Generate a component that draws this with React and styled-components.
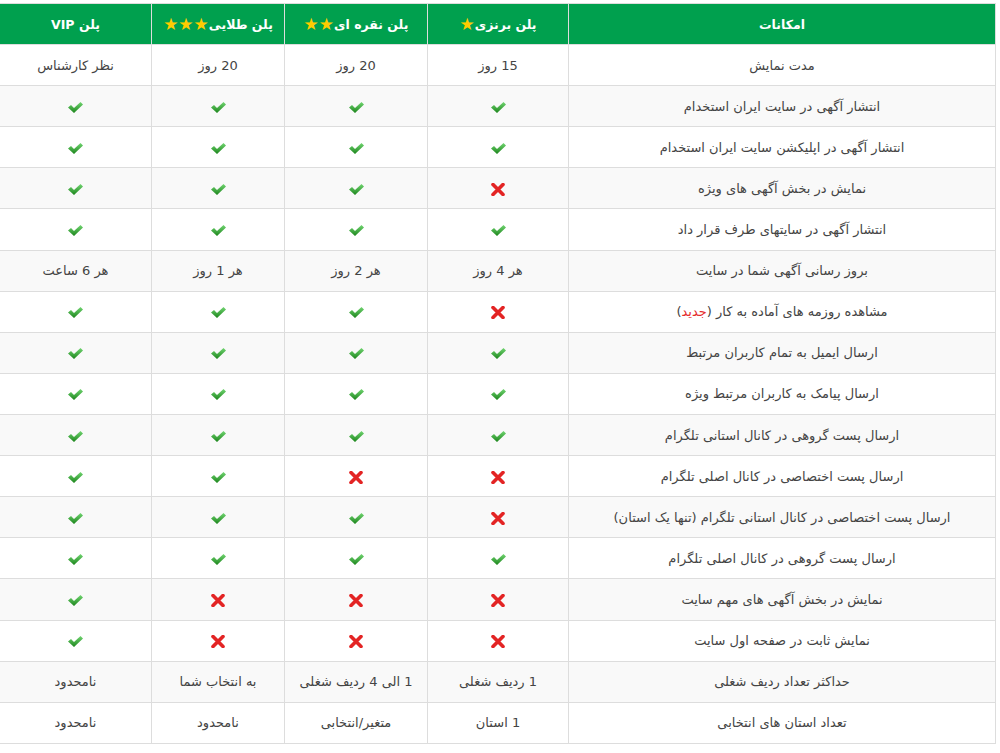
import React from "react";
import styled, { createGlobalStyle } from "styled-components";

const Global = createGlobalStyle`
    body {
        margin: 0;
        background: #fff;
        font-family: "DejaVu Sans", "Noto Sans", sans-serif;
    }
`

const Wrap = styled.div`
    padding: 3px 4px 0 4px;
    direction: rtl;
`

const Table = styled.table`
    width: 992px;
    border-collapse: collapse;
    table-layout: fixed;
    border: 1px solid #ddd;
    font-size: 13px;
    color: #444;
`

const Head = styled.th`
    background: #00a04e;
    color: #fff;
    font-weight: bold;
    font-size: 12.5px;
    height: 40px;
    padding: 0;
    text-align: center;
    border: 1px solid #ddd;
    width: ${p => p.$w}px;
`

const Stars = styled.span`
    color: #ffcc00;
    font-size: 17px;
    letter-spacing: -1px;
    vertical-align: -1px;
`

const Row = styled.tr`
    background: ${p => (p.$odd ? "#fff" : "#f9f9f9")};
`

const Cell = styled.td`
    height: 40.12px;
    padding: 0;
    text-align: center;
    vertical-align: middle;
    border: 1px solid #ddd;
`

const New = styled.span`
    color: #e52b2b;
`

const Check = () => (
    <svg width="17" height="13" viewBox="0 0 17 13" style={{ verticalAlign: "middle" }}>
        <defs>
            <linearGradient id="g" x1="0" y1="0" x2="0" y2="1">
                <stop offset="0" stopColor="#72d672" />
                <stop offset="1" stopColor="#1c851c" />
            </linearGradient>
        </defs>
        <path d="M1 6.5 L4 4 L7 7 L13.5 1 L16 3.5 L7 12 Z" fill="url(#g)" />
    </svg>
)

const Cross = () => (
    <svg width="14" height="13" viewBox="0 0 14 13" style={{ verticalAlign: "middle" }}>
        <path d="M2 1.5 L12 11.5 M12 1.5 L2 11.5" stroke="#e32424" strokeWidth="3.6" strokeLinecap="round" />
    </svg>
)

const Y = "y"
const N = "n"

const rows = [
    ["مدت نمایش", "15 روز", "20 روز", "20 روز", "نظر کارشناس"],
    ["انتشار آگهی در سایت ایران استخدام", Y, Y, Y, Y],
    ["انتشار آگهی در اپلیکشن سایت ایران استخدام", Y, Y, Y, Y],
    ["نمایش در بخش آگهی های ویژه", N, Y, Y, Y],
    ["انتشار آگهی در سایتهای طرف قرار داد", Y, Y, Y, Y],
    ["بروز رسانی آگهی شما در سایت", "هر 4 روز", "هر 2 روز", "هر 1 روز", "هر 6 ساعت"],
    ["new", N, Y, Y, Y],
    ["ارسال ایمیل به تمام کاربران مرتبط", Y, Y, Y, Y],
    ["ارسال پیامک به کاربران مرتبط ویژه", Y, Y, Y, Y],
    ["ارسال پست گروهی در کانال استانی تلگرام", Y, Y, Y, Y],
    ["ارسال پست اختصاصی در کانال اصلی تلگرام", N, N, Y, Y],
    ["ارسال پست اختصاصی در کانال استانی تلگرام (تنها یک استان)", N, Y, Y, Y],
    ["ارسال پست گروهی در کانال اصلی تلگرام", Y, Y, Y, Y],
    ["نمایش در بخش آگهی های مهم سایت", N, N, N, Y],
    ["نمایش ثابت در صفحه اول سایت", N, N, N, Y],
    ["حداکثر تعداد ردیف شغلی", "1 ردیف شغلی", "1 الی 4 ردیف شغلی", "به انتخاب شما", "نامحدود"],
    ["تعداد استان های انتخابی", "1 استان", "متغیر/انتخابی", "نامحدود", "نامحدود"],
]

const value = v => {
    if (v === Y) return <Check />
    if (v === N) return <Cross />
    if (v === "new") return <>مشاهده روزمه های آماده به کار (<New>جدید</New>)</>
    return v
}

const App = () => {
    return (
        <Wrap>
            <Global />
            <Table>
                <thead>
                    <tr>
                        <Head $w={426}>امکانات</Head>
                        <Head $w={140}>پلن برنزی<Stars>★</Stars></Head>
                        <Head $w={142}>پلن نقره ای<Stars>★★</Stars></Head>
                        <Head $w={132}>پلن طلایی<Stars>★★★</Stars></Head>
                        <Head $w={151}>پلن VIP</Head>
                    </tr>
                </thead>
                <tbody>
                    {rows.map((r, i) => (
                        <Row key={i} $odd={i % 2 === 0}>
                            {r.map((c, j) => (
                                <Cell key={j}>{value(c)}</Cell>
                            ))}
                        </Row>
                    ))}
                </tbody>
            </Table>
        </Wrap>
    )
}

export default App;
